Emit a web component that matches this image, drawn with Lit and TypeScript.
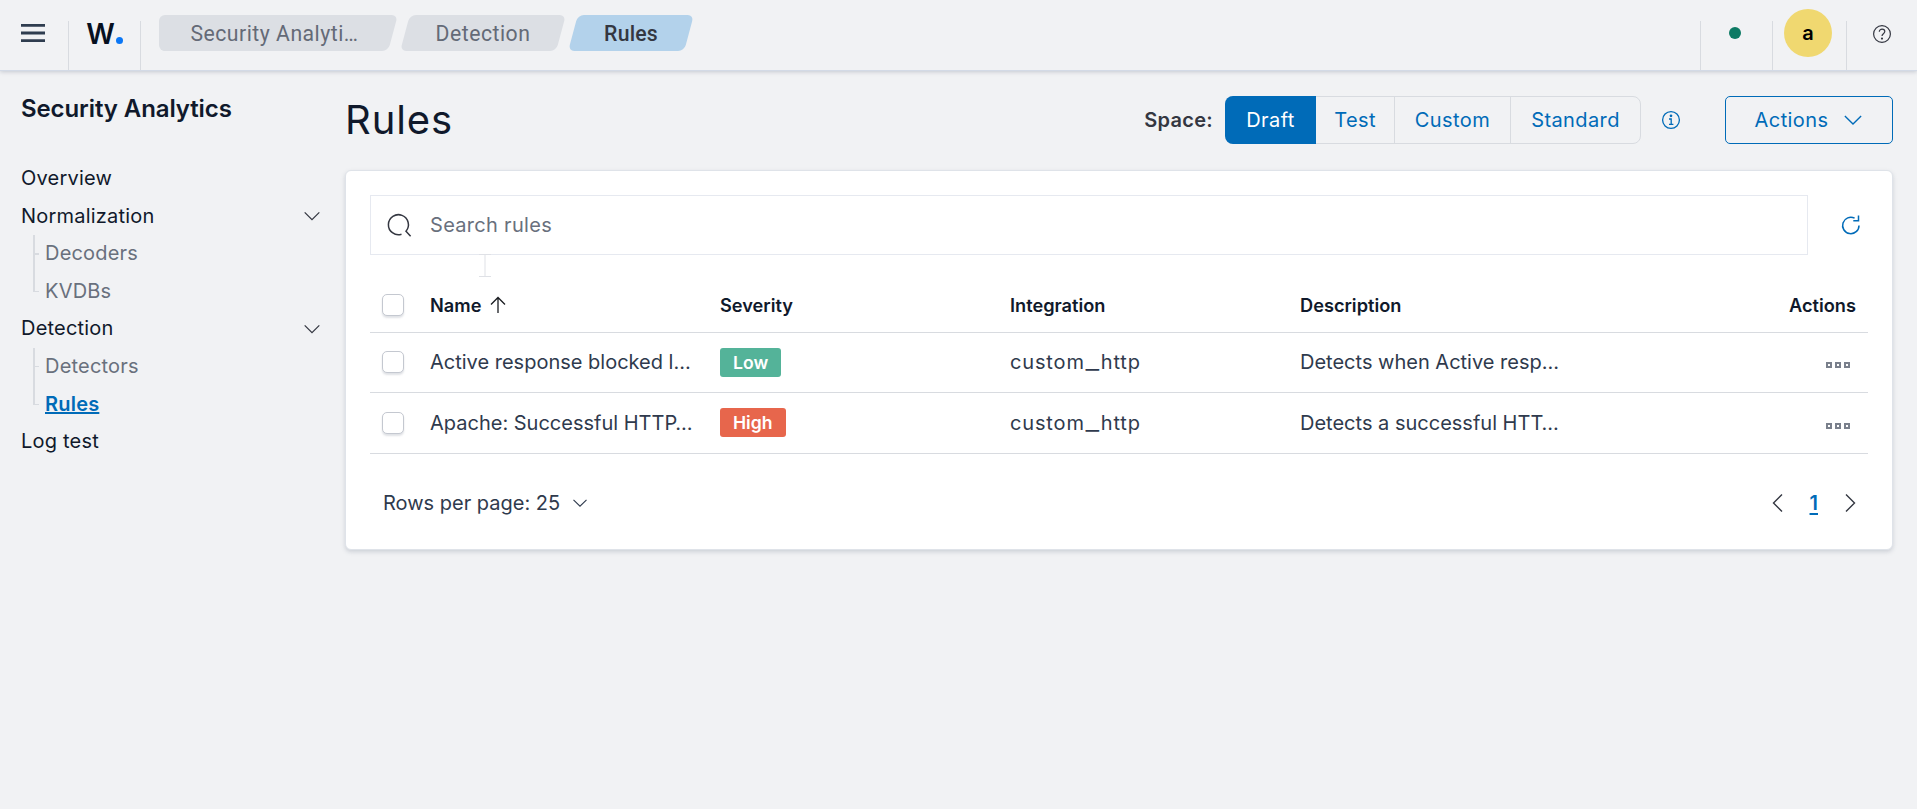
import { LitElement, html, css } from "lit";
import { customElement } from "lit/decorators.js";

const chevDown = (s: number) => html`<svg width=${s} height=${s} viewBox="0 0 16 16" fill="none" stroke="currentColor" stroke-width="1.1"><path d="M1.5 4.8 8 11.2l6.5-6.4"/></svg>`;
const dots = html`<svg width="24" height="8" viewBox="0 0 24 8"><g fill="none" stroke="#7a808c" stroke-width="2"><rect x="1" y="2" width="4" height="4"/><rect x="10" y="2" width="4" height="4"/><rect x="19" y="2" width="4" height="4"/></g></svg>`;

@customElement("app-root")
export class AppRoot extends LitElement {
  static styles = css`
    :host { display: block; width: 1917px; height: 809px; overflow: hidden; background: #f1f2f4; color: #2f3a4d; font-family: Inter, "Liberation Sans", sans-serif; font-size: 20px; position: relative; }
    header { height: 71px; margin-bottom: -1px; box-sizing: border-box; display: flex; align-items: flex-start; border-bottom: 1px solid #d3dae6; box-shadow: 0 1px 4px rgba(100,110,130,.3); background: #f1f2f4; position: relative; }
    .cell { align-self: flex-end; height: 49px; box-sizing: border-box; display: flex; justify-content: center; }
    .menu { width: 69px; border-right: 1px solid #d8dbe0; padding-right: 3px; }
    .menu svg { margin-top: 3px; }
    .logo { width: 72px; border-right: 1px solid #d8dbe0; font: 600 28px/24px Inter, sans-serif; color: #07101f; gap: 1px; padding-top: 1px; }
    .logo b { font-weight: 600; }
    .logo i { width: 7px; height: 7px; border-radius: 50%; background: #0b77f5; align-self: flex-start; margin-top: 15px; }
    .crumbs { display: flex; margin: 15px 0 0 18px; gap: 2px; }
    .crumb { position: relative; height: 36px; padding-top: 1px; display: flex; align-items: center; justify-content: center; font: 400 21.2px/36px Roboto, Inter, sans-serif; letter-spacing: .5px; color: #646a77; z-index: 0; box-sizing: border-box; }
    .crumb::before { content: ""; position: absolute; inset: 0 5px; background: #dcdfe4; border-radius: 6px; transform: skewX(-15deg); z-index: -1; }
    .crumb.first::after { content: ""; position: absolute; left: 0; top: 0; bottom: 0; width: 24px; background: #dcdfe4; border-radius: 6px 0 0 6px; z-index: -1; }
    .crumb.first { width: 239px; padding-right: 8px; }
    .crumb.second { width: 166px; }
    .crumb.third { width: 126px; font-weight: 500; color: #343741; letter-spacing: .2px; }
    .crumb.third::before { background: #b3d2eb; }
    .spacer { flex: 1; }
    .right { border-left: 1px solid #d8dbe0; align-items: flex-start; }
    .right.st { width: 72px; padding-right: 3px; }
    .right.av { width: 74px; padding-right: 3px; }
    .right.he { width: 71px; }
    .dot { width: 12px; height: 12px; background: #0d7a64; border-radius: 50%; margin-top: 6px; }
    .avatar { width: 48px; height: 48px; border-radius: 50%; background: #f0d870; color: #000; font: 600 20px/48px Inter, sans-serif; text-align: center; margin-top: -12px; }
    .he svg { margin-top: 3px; }
    main { display: grid; grid-template-columns: 345px 1fr; padding-right: 24px; }
    aside { padding: 22px 0 0 21px; }
    aside h2 { margin: 0 0 34px; font: 600 24px/34px Inter, sans-serif; color: #10192b; letter-spacing: -.1px; }
    nav { display: flex; flex-direction: column; width: 300px; letter-spacing: .2px; }
    .nav { height: 37.6px; line-height: 37.6px; color: #10192b; display: flex; justify-content: space-between; align-items: center; }
    .nav svg { color: #343741; }
    .sub { height: 37.6px; line-height: 37.6px; color: #69707d; padding-left: 24px; position: relative; }
    .sub::before { content: ""; position: absolute; left: 12px; top: 0; bottom: 0; width: 1.5px; background: #d8dbe0; }
    .sub::after { content: ""; position: absolute; left: 12px; top: 18px; width: 6px; height: 1.5px; background: #d8dbe0; }
    .sub.last::before { bottom: 18px; }
    .sub.active { color: #006bb8; font-weight: 600; text-decoration: underline; line-height: 36px; }
    .content { padding-top: 26px; min-width: 0; }
    .top { display: flex; align-items: center; height: 48px; }
    h1 { margin: 0; font: 400 40px/48px Inter, sans-serif; color: #10192b; flex: 1; letter-spacing: .9px; }
    .space { font-weight: 600; margin-right: 12px; color: #343741; letter-spacing: .3px; }
    .group { display: flex; height: 48px; box-sizing: border-box; border: 1px solid #d8dbe0; border-radius: 8px; width: 416px; letter-spacing: .4px; }
    .group span { display: flex; align-items: center; justify-content: center; color: #006bb8; border-right: 1px solid #d8dbe0; box-sizing: border-box; }
    .group span:last-child { border-right: 0; flex: 1; }
    .group .on { background: #006bb8; color: #fff; margin: -1px 0 -1px -1px; border-radius: 8px 0 0 8px; width: 91px; border: 0; }
    .t { width: 79px; }
    .c { width: 116px; }
    .info { margin: 0 44px 0 20px; color: #006bb8; display: flex; }
    .actions { width: 168px; height: 48px; box-sizing: border-box; border: 1px solid #006bb8; border-radius: 5px; color: #006bb8; display: flex; align-items: center; justify-content: center; gap: 15px; letter-spacing: .4px; }
    .card { margin-top: 26px; height: 380px; box-sizing: border-box; background: #fff; border: 1px solid #dfe3e9; border-radius: 6px; box-shadow: 0 2px 4px rgba(100,110,130,.25); padding: 24px; position: relative; }
    .searchrow { display: flex; align-items: center; }
    .search { width: 1438px; height: 60px; box-sizing: border-box; border: 1.5px solid #e6e9f0; display: flex; align-items: center; padding-left: 16px; gap: 17px; color: #69707d; letter-spacing: .3px; }
    .search svg { color: #343741; }
    .refresh { margin-left: 32px; color: #006bb8; display: flex; }
    .ibeam { position: absolute; left: 132px; top: 83px; width: 14px; height: 23px; }
    table { width: 1498px; border-collapse: collapse; table-layout: fixed; margin-top: 16px; }
    th, td { padding: 0; border-bottom: 1.5px solid #d8dbe0; text-align: left; white-space: nowrap; overflow: hidden; }
    th { height: 61px; box-sizing: border-box; padding-top: 8px; font-size: 18.2px; font-weight: 600; color: #10192b; }
    td { height: 60.5px; box-sizing: border-box; }
    .cb { width: 22px; height: 22px; display: block; margin-left: 12px; box-sizing: border-box; border: 1.5px solid #c4c8d0; border-radius: 5px; box-shadow: 0 2px 2px rgba(100,110,130,.2); background: #fff; }
    .sortname { display: flex; align-items: center; gap: 8px; }
    .badge { display: inline-block; height: 29px; line-height: 29px; padding: 0 13px; border-radius: 3px; color: #fff; font-weight: 600; font-size: 17.6px; vertical-align: middle; }
    .low { background: #54b399; }
    .high { background: #e7664c; }
    .mono { letter-spacing: .85px; }
    .us { display: inline-block; transform: scaleX(1.5); margin: 0 3px; }
    td.r { text-align: right; padding-right: 18px; }
    th.r { text-align: right; padding-right: 12px; }
    .foot { display: flex; justify-content: space-between; align-items: center; width: 1498px; margin-top: 34px; height: 30px; }
    .rows { display: flex; align-items: center; gap: 12px; margin-left: 13px; }
    .pager { display: flex; align-items: center; gap: 21px; padding-right: 11px; }
    .pager b { font-weight: 600; color: #006bb8; text-decoration: underline; text-underline-offset: 3px; padding: 0 4px; }
  `;

  private row(name: string, sev: string, cls: string, desc: string) {
    return html`<tr>
      <td><span class="cb"></span></td>
      <td>${name}</td>
      <td><span class="badge ${cls}">${sev}</span></td>
      <td class="mono">custom<span class="us">_</span>http</td>
      <td>${desc}</td>
      <td class="r">${dots}</td>
    </tr>`;
  }

  render() {
    return html`
      <header>
        <div class="cell menu"><svg width="24" height="18" viewBox="0 0 24 18"><path d="M0 1.4h24M0 9h24M0 16.6h24" stroke="#2f3d4f" stroke-width="2.8" fill="none"/></svg></div>
        <div class="cell logo"><b>W</b><i></i></div>
        <div class="crumbs">
          <div class="crumb first">Security Analyti…</div>
          <div class="crumb second">Detection</div>
          <div class="crumb third">Rules</div>
        </div>
        <div class="spacer"></div>
        <div class="cell right st"><span class="dot"></span></div>
        <div class="cell right av"><span class="avatar">a</span></div>
        <div class="cell right he"><svg width="20" height="20" viewBox="0 0 20 20" fill="none" stroke="#343741" stroke-width="1.2"><circle cx="10" cy="10" r="8.4"/><path d="M7.3 7.8c0-1.6 1.2-2.6 2.8-2.6s2.7 1 2.7 2.4c0 2.2-2.8 2.1-2.8 4.4"/><circle cx="10" cy="14.6" r=".5" fill="#343741"/></svg></div>
      </header>
      <main>
        <aside>
          <h2>Security Analytics</h2>
          <nav>
            <div class="nav">Overview</div>
            <div class="nav">Normalization ${chevDown(18)}</div>
            <div class="sub">Decoders</div>
            <div class="sub last">KVDBs</div>
            <div class="nav">Detection ${chevDown(18)}</div>
            <div class="sub">Detectors</div>
            <div class="sub last active">Rules</div>
            <div class="nav">Log test</div>
          </nav>
        </aside>
        <div class="content">
          <div class="top">
            <h1>Rules</h1>
            <span class="space">Space:</span>
            <div class="group">
              <span class="on">Draft</span>
              <span class="t">Test</span>
              <span class="c">Custom</span>
              <span>Standard</span>
            </div>
            <span class="info"><svg width="20" height="20" viewBox="0 0 20 20" fill="none" stroke="currentColor" stroke-width="1.3"><circle cx="10" cy="10" r="8.4"/><path d="M8 9h2.2v5.2M8 14.4h4.4"/><circle cx="10" cy="5.8" r=".7" fill="currentColor"/></svg></span>
            <div class="actions">Actions ${chevDown(20)}</div>
          </div>
          <div class="card">
            <div class="searchrow">
              <div class="search">
                <svg width="26" height="26" viewBox="0 0 26 26" fill="none" stroke="currentColor" stroke-width="1.5"><path d="M14.5 22.2A10 10 0 1 1 19 19.2l4.6 5"/></svg>
                Search rules
              </div>
              <span class="refresh"><svg width="22" height="22" viewBox="0 0 22 22" fill="none" stroke="currentColor" stroke-width="1.5"><path d="M14.6 4.2A8.2 8.2 0 1 0 19 11.4"/><path d="M18.5 1.5v5.3h-5.2"/></svg></span>
            </div>
            <svg class="ibeam" viewBox="0 0 14 23" fill="none" stroke="#dfe1e6" stroke-width="1"><path d="M1 .5h12M7 .5v22M1 22.5h12"/></svg>
            <table>
              <colgroup><col style="width:60px"/><col style="width:290px"/><col style="width:290px"/><col style="width:290px"/><col style="width:290px"/><col/></colgroup>
              <thead><tr>
                <th><span class="cb"></span></th>
                <th><span class="sortname">Name <svg width="18" height="18" viewBox="0 0 18 18" fill="none" stroke="#1a1c21" stroke-width="1.3"><path d="M9 17V1.5M2 8.5l7-7 7 7"/></svg></span></th>
                <th>Severity</th><th>Integration</th><th>Description</th><th class="r">Actions</th>
              </tr></thead>
              <tbody>
                ${this.row("Active response blocked l…", "Low", "low", "Detects when Active resp…")}
                ${this.row("Apache: Successful HTTP…", "High", "high", "Detects a successful HTT…")}
              </tbody>
            </table>
            <div class="foot">
              <div class="rows">Rows per page: 25 ${chevDown(16)}</div>
              <div class="pager">
                <svg width="14" height="20" viewBox="0 0 14 20" fill="none" stroke="#343741" stroke-width="1.4"><path d="M11 1.5 2.5 10l8.5 8.5"/></svg>
                <b>1</b>
                <svg width="14" height="20" viewBox="0 0 14 20" fill="none" stroke="#343741" stroke-width="1.4"><path d="M3 1.5 11.5 10 3 18.5"/></svg>
              </div>
            </div>
          </div>
        </div>
      </main>
    `;
  }
}
